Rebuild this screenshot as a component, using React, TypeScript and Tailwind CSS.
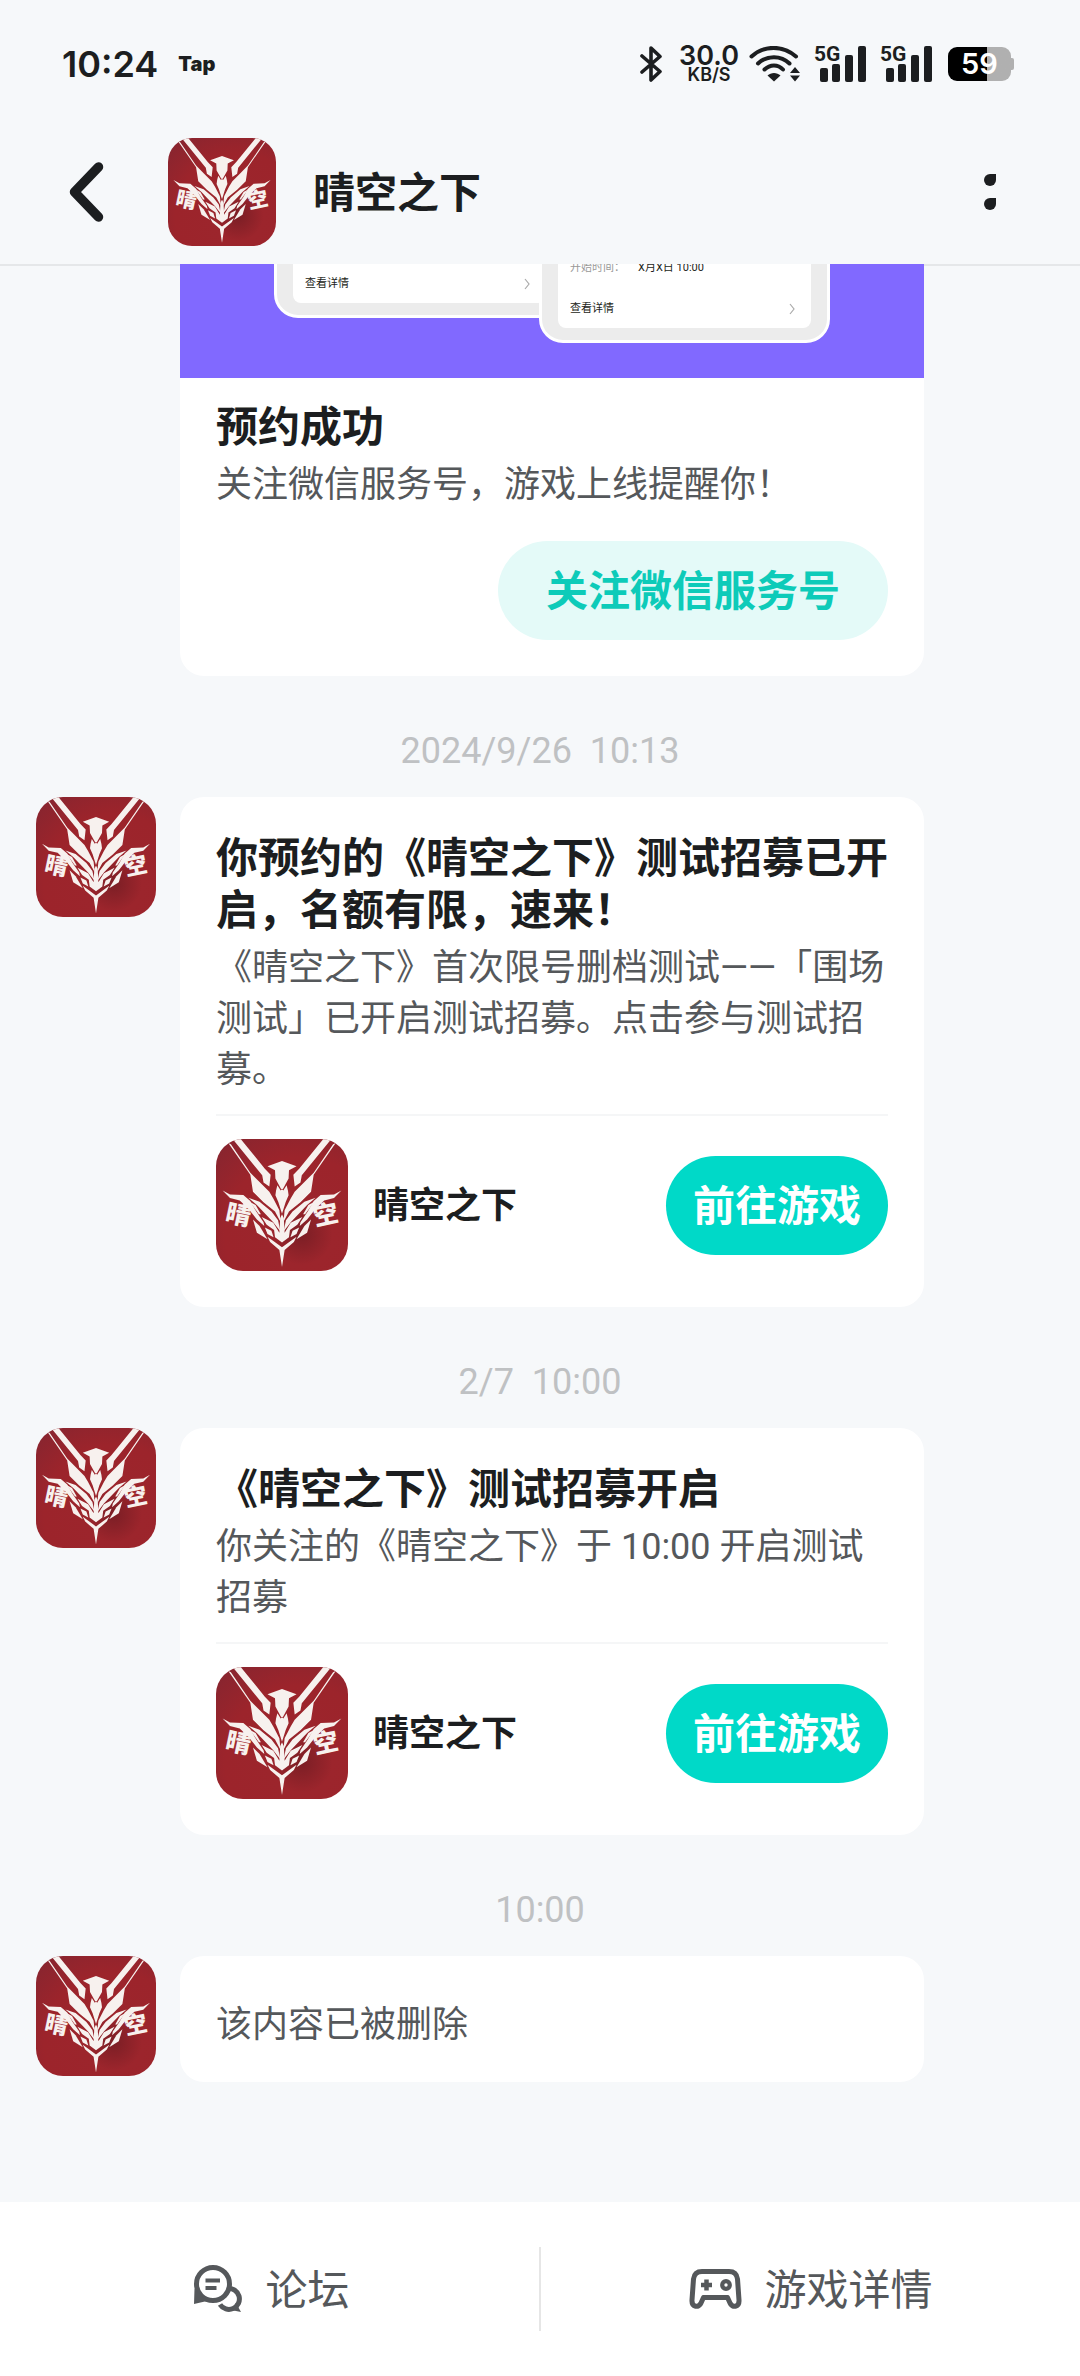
import React from "react";
import clsx from "clsx";

function LogoHalf() {
  return (
    <>
      <path d="M12.6 0 L18.7 0 L37 22.5 L41.4 27 L40.4 36 L36 33 L35 27.5 Z" />
      <path d="M9.3 3 L11.3 4 L26 25.5 L33 32.6 L40.4 40 L43.4 45 L48 54 L49 63 L44.7 55 L36 48 L28 40 L26 27 Z" />
      <path d="M50 16.7 L39 20.7 L44.7 23.7 L45 30 L49.2 37.6 L50 38 Z" />
      <path d="M50 38 L49 39 L46.5 35 L45.5 39 L45 42.7 L47.2 47.7 L50 56.6 Z" />
      <path d="M24.5 44.5 L33 47.5 L42 55 L47 61.6 L48.8 70 L43.4 63 L36 55.3 L31 50 Z" />
      <path d="M34.6 59 L43.4 63.5 L48 71 L48.6 60 L50 57 L50 78.500 L44.7 74.5 L44 69 L38.4 65 Z" />
      <path d="M37 67 L42 69.5 L43.6 74.5 L39 72 Z" />
      <path d="M5 39 L10.6 42 L20.7 42.4 L26 47 L30.5 55 L36 63 L36.6 66 L31 61 L24.5 52.8 L18 46.5 L10.6 44.7 Z" />
      <path d="M25.500 47.500 L30 50 L34 57 L32.500 57 Z" />
      <path d="M28 61 L33 66 L39 76 L31 71 Z" />
      <path d="M39 74 L50 82 L50 97 L48 84 L41 78 Z" />
    </>
  );
}

function GameIcon({ className }: { className: string }) {
  return (
    <svg
      viewBox="0 0 100 100"
      className={clsx(
        "block shrink-0 bg-[radial-gradient(circle_at_65%_72%,#7b1e25_0%,#9c252c_24%,#9c242b_60%,#842530_100%)]",
        className
      )}
      fill="#f7f1ee"
      role="img"
      aria-label="晴空之下"
    >
      <LogoHalf />
      <g transform="translate(100 0) scale(-1 1)">
        <LogoHalf />
      </g>
      <g fontFamily="'Noto Sans CJK SC', sans-serif" fontWeight="900" fontSize="19" textAnchor="middle">
        <text x="17" y="64" transform="rotate(12 17 57)">晴</text>
        <text x="83" y="64" transform="rotate(-12 83 57)">空</text>
      </g>
    </svg>
  );
}

function Signal() {
  return (
    <div className="relative h-9 w-[52px]">
      <span className="absolute -top-px left-0 font-['Roboto'] text-[21px] leading-[18px] font-bold">5G</span>
      <svg viewBox="0 0 52 36" className="size-full" fill="currentColor">
        <rect x="6" y="22" width="8" height="14" rx="2" />
        <rect x="18" y="18" width="8" height="18" rx="2" />
        <rect x="31" y="9" width="8" height="27" rx="2" />
        <rect x="44" y="0" width="8" height="36" rx="2" />
      </svg>
    </div>
  );
}

function StatusBar() {
  return (
    <div className="flex h-32 items-center pr-[66px] pl-[62px] font-['Inter']">
      <span className="text-[36px] leading-10 font-semibold">10:24</span>
      <span className="ml-5 text-[20px] leading-10 font-black">Tap</span>
      <div className="ml-auto flex items-center">
        <svg viewBox="0 0 22 36" className="h-9 w-[22px]" fill="none" stroke="currentColor" strokeWidth="3.6" strokeLinejoin="round" strokeLinecap="round">
          <path d="M2 10 L20 25.500 L11 34 V2 L20 10.500 L2 26" />
        </svg>
        <div className="ml-[18px] flex w-[58px] flex-col items-center">
          <span className="text-[27px] leading-[22px] font-semibold">30.0</span>
          <span className="text-[18px] leading-4 font-semibold">KB/S</span>
        </div>
        <svg viewBox="0 0 52 36" className="ml-[11px] h-9 w-[52px]" fill="none" stroke="currentColor" strokeWidth="4" strokeLinecap="round">
          <path d="M2.500 10.500 C15 -1 34 -1 47 10.500" />
          <path d="M9 17.500 C18 9 32 9 40.500 17.500" />
          <path d="M15.500 23.500 C21 18 29 18 34 23.500" />
          <path d="M25 35.500 L18.500 29.500 C22 26 28 26 31.500 29.500 Z" fill="currentColor" stroke="none" />
          <path d="M46 21 L51 27 H41 Z M46 35.500 L51 29.500 H41 Z" fill="currentColor" stroke="none" />
        </svg>
        <div className="ml-[13px]">
          <Signal />
        </div>
        <div className="ml-[14px]">
          <Signal />
        </div>
        <div className="ml-4 flex items-center">
          <div className="flex h-[34px] w-[63px] items-center justify-center rounded-[9px] bg-linear-to-r from-black from-62% to-[#b0b0b0] to-62% text-[29px] font-semibold text-white">
            59
          </div>
          <div className="h-3 w-[3px] rounded-r-xs bg-[#b0b0b0]" />
        </div>
      </div>
    </div>
  );
}

function Navbar() {
  return (
    <div className="flex h-[136px] items-center pb-2">
      <button type="button" aria-label="返回" className="ml-[63px] flex h-24 w-[45px] items-center justify-center">
        <svg viewBox="0 0 36 60" className="h-[60px] w-9" fill="none" stroke="currentColor" strokeWidth="9.500" strokeLinecap="round" strokeLinejoin="round">
          <path d="M30.500 5 L6.500 30 L30.500 55" />
        </svg>
      </button>
      <GameIcon className="ml-[60px] size-[108px] rounded-[24px]" />
      <h1 className="ml-[37px] pt-1 text-[42px] leading-[52px] font-bold">晴空之下</h1>
      <button type="button" aria-label="更多" className="mr-[66px] ml-auto flex h-24 w-12 flex-col items-center justify-center gap-3">
        <span className="size-3 rounded-full rounded-tr-xs bg-[#1c1e20]" />
        <span className="size-3 rounded-full rounded-tr-xs bg-[#1c1e20]" />
      </button>
    </div>
  );
}

function PreviewPhone({ className, children }: { className?: string; children?: React.ReactNode }) {
  return (
    <div className={clsx("h-40 w-[291px] shrink-0 rounded-[24px] border-[3px] border-white bg-[#ececec] px-4 pb-3", className)}>
      <div className="flex h-full flex-col justify-end rounded-lg bg-white px-3">
        {children}
        <div className="flex h-10 items-center justify-between pt-[2px]">
          <span>查看详情</span>
          <svg viewBox="0 0 6 12" className="mr-1 h-3 w-[6px]" fill="none" stroke="#aaa" strokeWidth="1.200">
            <path d="M1 1 L5 6 L1 11" />
          </svg>
        </div>
      </div>
    </div>
  );
}

function Time({ children }: { children: React.ReactNode }) {
  return (
    <p className="pt-[54px] pb-[25px] text-center text-[36px] leading-[42px] whitespace-pre text-[#bfc1c3]">{children}</p>
  );
}

function Message({ children }: { children: React.ReactNode }) {
  return (
    <div className="flex items-start gap-6 pr-[156px] pl-9">
      <GameIcon className="size-[120px] rounded-[27px]" />
      <div className="min-w-0 flex-1 rounded-[24px] bg-white px-9">{children}</div>
    </div>
  );
}

function GameCard({ title, text }: { title: string; text: string }) {
  return (
    <Message>
      <h2 className="pt-9 text-[42px] leading-[52px] font-bold">{title}</h2>
      <p className="mt-[6px] text-[36px] leading-[51px] text-[#55585b]">{text}</p>
      <div className="mt-[18px] flex items-center border-t-2 border-[#f5f6f7] pt-[23px] pb-9">
        <GameIcon className="size-[132px] rounded-[27px]" />
        <h3 className="ml-[25px] pt-[2px] text-[36px] leading-[52px] font-bold">晴空之下</h3>
        <button type="button" className="ml-auto h-[99px] rounded-full bg-[#00d9c8] px-[27px] pt-[2px] text-[42px] font-bold text-white">
          前往游戏
        </button>
      </div>
    </Message>
  );
}

function Footer() {
  return (
    <footer className="mt-auto flex h-[174px] items-center bg-white text-[42px] text-[#55585b]">
      <a href="#forum" className="flex flex-1 items-center justify-center gap-[22px]">
        <svg viewBox="0 0 54 54" className="size-[54px]" fill="none" stroke="currentColor" strokeWidth="5">
          <path d="M38.500 26.500 A10.500 10.500 0 1 1 31 42.500" />
          <path d="M47 41 L52 50 L42 48 Z" fill="currentColor" stroke="none" />
          <circle cx="24" cy="22" r="16.500" fill="white" />
          <path d="M5.500 27 L5 42 L18 39 Z" fill="currentColor" stroke="none" />
          <path d="M16.500 18.500 H31 M16.500 26 H27.500" strokeWidth="4" />
        </svg>
        <span className="pt-[2px]">论坛</span>
      </a>
      <div className="h-[84px] w-[2px] bg-[#e6e6e6]" />
      <a href="#detail" className="flex flex-1 items-center justify-center gap-[22px]">
        <svg viewBox="0 0 54 54" className="size-[54px]" fill="none" stroke="currentColor" strokeWidth="5" strokeLinejoin="round">
          <path d="M14 9.500 H41 C47 9.500 49 13 49.500 17 L51 38 C51.500 45.500 44 46 42 41 L39.500 35.500 H15.500 L13 41 C11 46 3.500 45.500 4 38 L5.500 17 C6 13 8 9.500 14 9.500 Z" />
          <path d="M13 23 H24 M18.500 17.500 V28.500" strokeWidth="4.500" />
          <circle cx="38" cy="23" r="3.800" strokeWidth="4.200" />
        </svg>
        <span className="pt-[2px]">游戏详情</span>
      </a>
    </footer>
  );
}

export default function App() {
  return (
    <div className="flex min-h-screen flex-col bg-[#f6f8fa] font-['Roboto','Noto_Sans_CJK_SC',sans-serif] text-[#1c1e20]">
      <header>
        <StatusBar />
        <Navbar />
      </header>

      <main className="border-t-2 border-[#e5e7e9] pb-[120px]">
        <div className="-mt-[2px] mr-[156px] ml-[180px] rounded-b-[24px] bg-white">
          <div className="flex h-[114px] items-end justify-center overflow-hidden bg-[#8169ff] pb-[35px] text-[11px] leading-4">
            <PreviewPhone className="mb-[25px]" />
            <PreviewPhone className="-ml-[26px]">
              <div className="flex h-[41px] items-center">
                <span className="w-[68px] text-[#999]">开始时间：</span>
                <span>X月X日 10:00</span>
              </div>
            </PreviewPhone>
          </div>
          <div className="px-9 pt-6 pb-9">
            <h2 className="text-[42px] leading-[52px] font-bold">预约成功</h2>
            <p className="mt-[6px] text-[36px] leading-[51px] text-[#55585b]">关注微信服务号，游戏上线提醒你！</p>
            <button type="button" className="mt-[30px] ml-auto block h-[99px] rounded-full bg-[#e4faf8] px-12 pt-[2px] text-[42px] font-bold text-[#0dcbb9]">
              关注微信服务号
            </button>
          </div>
        </div>

        <Time>{"2024/9/26  10:13"}</Time>
        <GameCard
          title="你预约的《晴空之下》测试招募已开启，名额有限，速来！"
          text="《晴空之下》首次限号删档测试——「围场测试」已开启测试招募。点击参与测试招募。"
        />

        <Time>{"2/7  10:00"}</Time>
        <GameCard title="《晴空之下》测试招募开启" text="你关注的《晴空之下》于 10:00 开启测试招募" />

        <Time>10:00</Time>
        <Message>
          <p className="pt-11 pb-[31px] text-[36px] leading-[51px] text-[#55585b]">该内容已被删除</p>
        </Message>
      </main>

      <Footer />
    </div>
  );
}
